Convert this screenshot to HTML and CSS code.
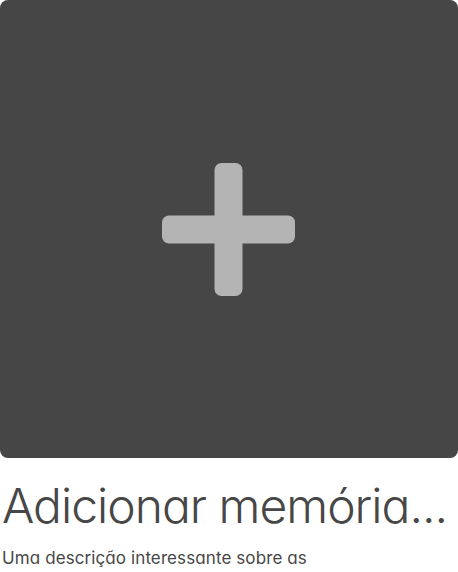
FILE: index.html
```html
<!DOCTYPE html>
<html lang="pt">
<head>
<meta charset="utf-8">
<link rel="stylesheet" href="styles.css">
</head>
<body>
<div class="memory">
  <div class="cover">
    <svg class="plus" width="133" height="133" viewBox="0 0 133 133" aria-hidden="true">
      <rect x="52.5" y="0" width="28" height="133" rx="7" fill="#b4b4b4"/>
      <rect x="0" y="52.5" width="133" height="28" rx="7" fill="#b4b4b4"/>
    </svg>
  </div>
  <h2 class="title">Adicionar memória...</h2>
  <p class="desc">Uma descrição interessante sobre as</p>
</div>
</body>
</html>
```
FILE: styles.css
```css
html, body {
  margin: 0;
  padding: 0;
  background: #ffffff;
}
.memory {
  width: 458px;
  font-family: Inter, "Open Sans", sans-serif;
  font-feature-settings: "cv11" 1;
  color: #474747;
}
.cover {
  width: 458px;
  height: 458px;
  background: #464646;
  border-radius: 8px;
  display: flex;
  align-items: center;
  justify-content: center;
}
.plus {
  display: block;
  margin-right: 1px;
}
.title {
  margin: 20px 0 0 2px;
  font-size: 48px;
  line-height: 56px;
  font-weight: 300;
  letter-spacing: -1px;
  white-space: nowrap;
}
.desc {
  margin: 12px 0 0 2px;
  font-size: 17px;
  line-height: 24px;
  font-weight: 400;
  letter-spacing: 0.1px;
  white-space: nowrap;
}
```
